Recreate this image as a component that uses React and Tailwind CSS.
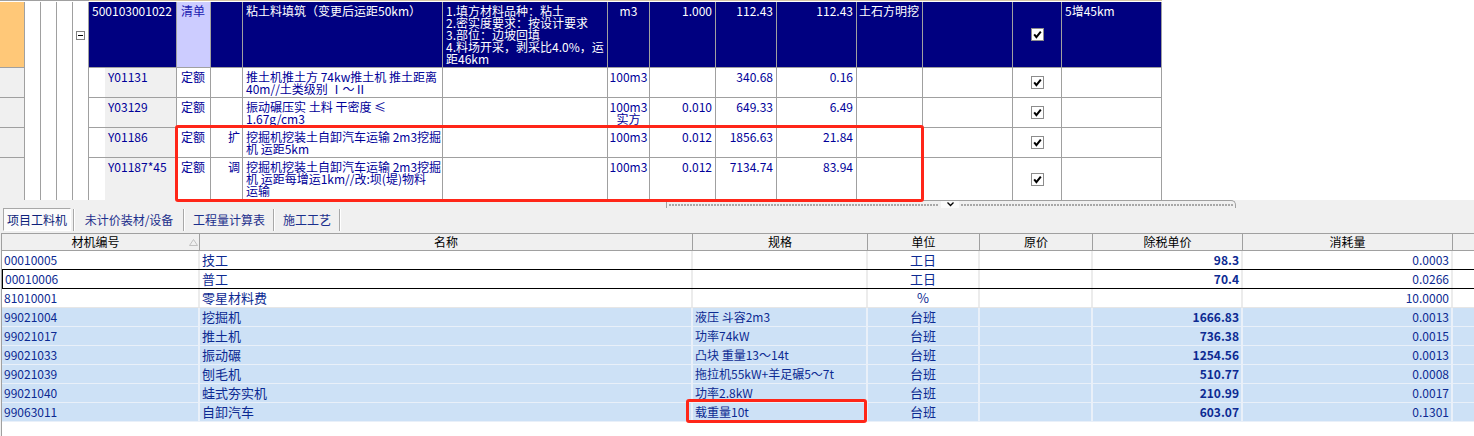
import React from "react";

const NAVY = "bg-[#000080]";

function Cell({ w, nb, className = "", children }) {
  return (
    <div className={"h-full shrink-0 border-r border-[#a0a0a0] " + (nb ? "" : "border-b ") + w + " " + className}>
      {children}
    </div>
  );
}

function Check() {
  return (
    <svg width="13" height="13" viewBox="0 0 13 13">
      <rect x="0.5" y="0.5" width="12" height="12" fill="#fff" stroke="#8c8c8c" />
      <path d="M3.2 6.4 L5.4 9.2 L9.8 3.6" fill="none" stroke="#000" strokeWidth="2" />
    </svg>
  );
}

function Minus() {
  return (
    <svg width="9" height="9" viewBox="0 0 9 9">
      <rect x="0.5" y="0.5" width="8" height="8" fill="#fff" stroke="#808080" />
      <path d="M2 4.5 H7" stroke="#000" strokeWidth="1" />
    </svg>
  );
}

function Lines({ items }) {
  return (
    <>
      {items.map((t, i) => (
        <div key={i} className="whitespace-nowrap">{t}</div>
      ))}
    </>
  );
}

const subRows = [
  { code: "Y01131", mark: "", name: ["推土机推土方 74kw推土机 推土距离", "40m//土类级别 Ⅰ～Ⅱ"], unit: ["100m3"], qty: "", price: "340.68", total: "0.16", h: "h-[30px]" },
  { code: "Y03129", mark: "", name: ["振动碾压实 土料 干密度 ≤", "1.67g/cm3"], unit: ["100m3", "实方"], qty: "0.010", price: "649.33", total: "6.49", h: "h-[30px]" },
  { code: "Y01186", mark: "扩", name: ["挖掘机挖装土自卸汽车运输 2m3挖掘", "机 运距5km"], unit: ["100m3"], qty: "0.012", price: "1856.63", total: "21.84", h: "h-[30px]" },
  { code: "Y01187*45", mark: "调", name: ["挖掘机挖装土自卸汽车运输 2m3挖掘", "机 运距每增运1km//改:坝(堤)物料", "运输"], unit: ["100m3"], qty: "0.012", price: "7134.74", total: "83.94", h: "h-[42px]", last: true },
];

const mats = [
  ["00010005", "技工", "", "工日", "98.3", "0.0003"],
  ["00010006", "普工", "", "工日", "70.4", "0.0266"],
  ["81010001", "零星材料费", "", "%", "", "10.0000"],
  ["99021004", "挖掘机", "液压 斗容2m3", "台班", "1666.83", "0.0013"],
  ["99021017", "推土机", "功率74kW", "台班", "736.38", "0.0015"],
  ["99021033", "振动碾", "凸块 重量13～14t", "台班", "1254.56", "0.0013"],
  ["99021039", "刨毛机", "拖拉机55kW+羊足碾5～7t", "台班", "510.77", "0.0008"],
  ["99021040", "蛙式夯实机", "功率2.8kW", "台班", "210.99", "0.0017"],
  ["99063011", "自卸汽车", "载重量10t", "台班", "603.07", "0.1301"],
];

function TopGrid() {
  return (
    <div className="h-[200px] bg-white">
      <div className="flex h-[2px]">
        <div className="w-[89px] border-t border-[#a0a0a0]" />
        <div className="w-[1073px] border-t border-[#d6c6a4]" />
      </div>
      {/* 清单 row */}
      <div className="flex h-[66px] text-white">
        <Cell w="w-[25px]" className="bg-[#ffc878]" />
        <Cell w="w-[16px]" nb />
        <Cell w="w-[16px]" nb />
        <Cell w="w-[16px]" nb />
        <Cell w="w-[16px]" nb className="flex items-center justify-center">
          <Minus />
        </Cell>
        <Cell w="w-[88px]" className={NAVY + " pl-[3px] pt-[3px]"}>500103001022</Cell>
        <Cell w="w-[34px]" className="bg-[#ccccff] pl-[4px] pt-[3px] text-[#1a1ab0]">清单</Cell>
        <Cell w="w-[32px]" className={NAVY} />
        <Cell w="w-[200px]" className={NAVY + " pl-[3px] pt-[3px] whitespace-nowrap"}>粘土料填筑（变更后运距50km）</Cell>
        <Cell w="w-[165px]" className={NAVY + " pl-[3px] pt-[3px]"}>
          <Lines items={["1.填方材料品种：粘土", "2.密实度要求：按设计要求", "3.部位：边坡回填", "4.料场开采，剥采比4.0%，运", "距46km"]} />
        </Cell>
        <Cell w="w-[42px]" className={NAVY + " pt-[3px] text-center"}>m3</Cell>
        <Cell w="w-[66px]" className={NAVY + " pt-[3px] pr-[3px] text-right"}>1.000</Cell>
        <Cell w="w-[61px]" className={NAVY + " pt-[3px] pr-[3px] text-right"}>112.43</Cell>
        <Cell w="w-[80px]" className={NAVY + " pt-[3px] pr-[3px] text-right"}>112.43</Cell>
        <Cell w="w-[66px]" className={NAVY + " pt-[3px] pl-[2px] whitespace-nowrap"}>土石方明挖</Cell>
        <Cell w="w-[90px]" className={NAVY} />
        <Cell w="w-[49px]" className={NAVY + " flex items-center justify-center"}>
          <Check />
        </Cell>
        <Cell w="w-[100px]" className={NAVY + " pl-[3px] pt-[3px]"}>5增45km</Cell>
      </div>
      {subRows.map((r) => (
        <div key={r.code} className={"flex text-[#000099] " + r.h}>
          <Cell w="w-[25px]" nb={r.last} className="bg-[#f0f0f0]" />
          <Cell w="w-[16px]" nb />
          <Cell w="w-[16px]" nb />
          <Cell w="w-[16px]" nb />
          <Cell w="w-[16px]" nb />
          <div className={"h-full w-[16px] shrink-0 border-[#a0a0a0] " + (r.last ? "" : "border-b")} />
          <Cell w="w-[72px]" nb={r.last} className="bg-[#f0f0f0] pl-[3px] pt-[3px] whitespace-nowrap">{r.code}</Cell>
          <Cell w="w-[34px]" nb={r.last} className="pl-[4px] pt-[3px]">定额</Cell>
          <Cell w="w-[32px]" nb={r.last} className="pr-[2px] pt-[3px] text-right">{r.mark}</Cell>
          <Cell w="w-[200px]" nb={r.last} className="pl-[3px] pt-[3px]">
            <Lines items={r.name} />
          </Cell>
          <Cell w="w-[165px]" nb={r.last} />
          <Cell w="w-[42px]" nb={r.last} className="pt-[3px] text-center">
            <Lines items={r.unit} />
          </Cell>
          <Cell w="w-[66px]" nb={r.last} className="pt-[3px] pr-[3px] text-right">{r.qty}</Cell>
          <Cell w="w-[61px]" nb={r.last} className="pt-[3px] pr-[3px] text-right">{r.price}</Cell>
          <Cell w="w-[80px]" nb={r.last} className="pt-[3px] pr-[3px] text-right">{r.total}</Cell>
          <Cell w="w-[66px]" nb={r.last} />
          <Cell w="w-[90px]" nb={r.last} />
          <Cell w="w-[49px]" nb={r.last} className="flex items-center justify-center">
            <Check />
          </Cell>
          <Cell w="w-[100px]" nb={r.last} />
        </div>
      ))}
    </div>
  );
}

function ScrollStrip() {
  const dots = "h-[2px] mt-[3px] bg-[repeating-linear-gradient(90deg,#a8a8a8_0_2px,transparent_2px_3px)]";
  return (
    <div className="flex h-[8px] pl-[666px]">
      <div className="w-[275px] border-t border-l border-[#a0a0a0] px-[2px]">
        <div className={dots} />
      </div>
      <div className="flex w-[18px] justify-center border-t border-[#a0a0a0] bg-[#fafafa]">
        <svg width="9" height="6" viewBox="0 0 9 6">
          <path d="M1.5 1.5 L4.5 4.5 L7.5 1.5" fill="none" stroke="#000" strokeWidth="1.3" />
        </svg>
      </div>
      <div className="w-[277px] rounded-tr-[5px] border-t border-r border-[#a0a0a0] px-[2px]">
        <div className={dots} />
      </div>
    </div>
  );
}

function Tabs() {
  const sep = <div className="h-[22px] w-[2px] shrink-0 border-l border-r border-l-[#a8a8a8] border-r-white" />;
  return (
    <div className="flex h-[25px] items-start pl-[3px] text-[#1c2f8c]">
      <div className="flex h-[23px] w-[68px] items-center justify-center border border-[#a8a8a8] border-r-white border-b-white bg-[#fbfbfb] text-[#0d1f7a]">项目工料机</div>
      <div className="mt-[1px] flex items-center">
        <div className="w-[2px]" />
        {sep}
        <div className="flex h-[22px] w-[108px] items-center justify-center">未计价装材/设备</div>
        {sep}
        <div className="flex h-[22px] w-[88px] items-center justify-center">工程量计算表</div>
        {sep}
        <div className="flex h-[22px] w-[64px] items-center justify-center">施工工艺</div>
        {sep}
      </div>
    </div>
  );
}

function MatTable() {
  const hcell = "flex h-full shrink-0 items-center justify-center border-r border-[#a0a0a0]";
  return (
    <div className="ml-px h-[203px] border-l border-[#a0a0a0] bg-white">
      <div className="flex h-[18px] border-t border-b border-[#a0a0a0] bg-[#f0f0f0] text-black">
        <div className={hcell + " w-[198px]"}>
          <span className="w-[185px] text-center">材机编号</span>
          <svg width="9" height="7" viewBox="0 0 9 7" className="ml-[1px]">
            <path d="M4.5 0.5 L8.5 6.5 H0.5 Z" fill="none" stroke="#c0c0c0" />
          </svg>
        </div>
        <div className={hcell + " w-[493px]"}>名称</div>
        <div className={hcell + " w-[175px]"}>规格</div>
        <div className={hcell + " w-[112px]"}>单位</div>
        <div className={hcell + " w-[113px]"}>原价</div>
        <div className={hcell + " w-[150px]"}>除税单价</div>
        <div className={hcell + " w-[210px]"}>消耗量</div>
        <div className="h-full flex-1" />
      </div>
      {mats.map((m, i) => {
        const blue = i >= 3;
        const rowCls =
          i === 0 || i === 1
            ? "border-b border-black bg-white"
            : blue
            ? "border-b border-[#e9f0f9] bg-[#cde1f6]"
            : "border-b border-[#e6e6e6] bg-white";
        const cd = blue ? " border-r-2 border-[#e9f0f9]" : " border-r-2 border-[#ececec]";
        return (
          <div key={m[0]} className={"flex h-[19px] text-[#0c2a92] " + rowCls}>
            <div className={"flex h-full w-[198px] shrink-0 items-center pl-[2px]" + cd + (i === 1 ? " border-l border-l-black" : "")}>{m[0]}</div>
            <div className={"flex h-full w-[493px] shrink-0 items-center pl-[2px] text-[13px]" + cd}>{m[1]}</div>
            <div className={"flex h-full w-[175px] shrink-0 items-center pl-[2px] whitespace-nowrap" + cd}>{m[2]}</div>
            <div className={"flex h-full w-[112px] shrink-0 items-center justify-center text-[13px]" + cd}>{m[3]}</div>
            <div className={"h-full w-[113px] shrink-0" + cd} />
            <div className={"flex h-full w-[150px] shrink-0 items-center justify-end pr-[2px] font-bold" + cd}>{m[4]}</div>
            <div className={"flex h-full w-[210px] shrink-0 items-center justify-end pr-[2px]" + cd}>{m[5]}</div>
            <div className="h-full flex-1" />
          </div>
        );
      })}
    </div>
  );
}

export default function App() {
  return (
    <div className="relative h-[436px] w-[1474px] overflow-hidden bg-[#f0f0f0] font-['Noto_Sans_CJK_SC','Liberation_Sans',sans-serif] text-[12px] leading-[12px]">
      <TopGrid />
      <ScrollStrip />
      <Tabs />
      <MatTable />
      <div className="absolute left-[175px] top-[125px] h-[77px] w-[749px] rounded-[3px] border-[3px] border-[#ff2618]" />
      <div className="absolute left-[686px] top-[399px] h-[24px] w-[181px] rounded-[3px] border-[3px] border-[#ff2618]" />
    </div>
  );
}
